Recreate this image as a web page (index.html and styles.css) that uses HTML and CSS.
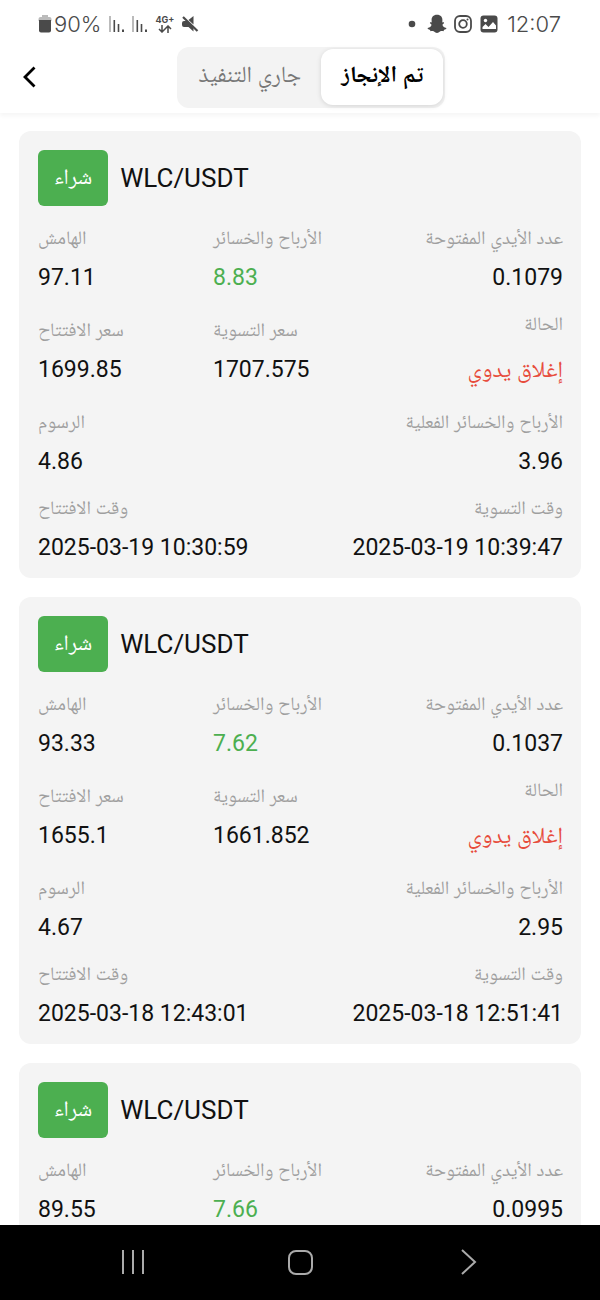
FILE: index.html
```html
<!DOCTYPE html>
<html lang="ar">
<head>
    <meta charset="UTF-8">
    <meta name="viewport" content="width=device-width, initial-scale=1">
    <title>WLC/USDT</title>
    <link rel="stylesheet" href="styles.css">
</head>
<body>
<div class="status-bar">
    <div class="status-group">
        <svg width="14" height="18" viewBox="0 0 14 18">
            <path d="M4 0h6v2h1.500q2 0 2 2v2h-13v-2q0-2 2-2h1.500z" fill="#bbb"/>
            <path d="M1 5h12v10.500q0 2-2 2h-8q-2 0-2-2z" fill="#4a4a4a"/>
        </svg>
        <span class="battery">90%</span>
        <svg class="signal" width="16" height="18" viewBox="0 0 16 18" fill="#4a4a4a">
            <path d="M0 1h2v16h-2z" fill="#bbb"/>
            <path d="M4.500 5h1.600v12h-1.600zM8.700 9h1.600v8h-1.600zM13 14.500h2v2.500h-2z"/>
        </svg>
        <svg class="signal" width="16" height="18" viewBox="0 0 16 18" fill="#4a4a4a">
            <path d="M0 1h2v16h-2z" fill="#bbb"/>
            <path d="M4.500 5h1.600v12h-1.600zM8.700 9h1.600v8h-1.600zM13 14.500h2v2.500h-2z"/>
        </svg>
        <div class="network">
            <span>4G+</span>
            <svg width="14" height="8" viewBox="0 0 14 8" fill="none" stroke="#4a4a4a" stroke-width="1.500">
                <path d="M4 0v7M1 4l3 3 3-3M10 8V1M7 4l3-3 3 3"/>
            </svg>
        </div>
        <svg width="18" height="18" viewBox="0 0 18 18" fill="#4a4a4a">
            <path d="M3 6h3l6.500 6.500v4L7.500 12H3q-2 0-2-2V8q0-2 2-2zM7.500 5l5-4v8.500z"/>
            <path d="M2 2l14.500 14" stroke="#4a4a4a" stroke-width="2.200"/>
        </svg>
    </div>
    <div class="status-group right">
        <svg class="dot" width="8" height="8" viewBox="0 0 8 8"><circle cx="4" cy="4" r="3.300" fill="#4a4a4a"/></svg>
        <svg width="20" height="20" viewBox="0 0 20 20" fill="#4a4a4a">
            <path d="M10 .8C6.200 .8 4.500 3.300 4.600 6.200L4.700 8.300C4 8.600 3.200 8 2.900 8.800 2.700 9.700 4.400 10 4.500 10.700 4.500 12 3 13.600 .6 14.100 .4 15.300 2 15.700 3 15.900L3.500 17.200C4.700 17 5.900 16.800 7 17.600 8 18.400 8.800 19 10 19S12 18.400 13 17.600C14.100 16.800 15.300 17 16.500 17.200L17 15.900C18 15.700 19.600 15.300 19.400 14.100 17 13.600 15.500 12 15.500 10.700 15.600 10 17.300 9.700 17.100 8.800 16.800 8 16 8.600 15.300 8.300L15.400 6.200C15.500 3.300 13.800 .8 10 .8z"/>
        </svg>
        <svg width="20" height="20" viewBox="0 0 20 20" fill="none" stroke="#4a4a4a" stroke-width="1.800">
            <rect x="2" y="2" width="16" height="16" rx="5"/>
            <circle cx="10" cy="10" r="3.800"/>
            <circle cx="14.500" cy="5.500" r="1" fill="#4a4a4a" stroke="none"/>
        </svg>
        <svg width="20" height="20" viewBox="0 0 20 20">
            <rect x="1.500" y="1.500" width="17" height="17" rx="3" fill="#4a4a4a"/>
            <circle cx="6.500" cy="6.500" r="1.700" fill="#fff"/>
            <path d="M3.500 15v-2l3-3 3 3 4.500-5 3 3.500v3.500z" fill="#fff"/>
        </svg>
        <span class="clock">12:07</span>
    </div>
</div>

<header class="header">
    <button class="back" aria-label="رجوع">
        <svg width="14" height="22" viewBox="0 0 14 22" fill="none" stroke="#000" stroke-width="2.800">
            <path d="M12.500 1.500L3 11l9.500 9.500"/>
        </svg>
    </button>
    <div class="tabs">
        <button class="tab">جاري التنفيذ</button>
        <button class="tab active">تم الإنجاز</button>
    </div>
</header>

<main class="list">
    <section class="card">
        <div class="card-title">
            <span class="badge">شراء</span>
            <h2>WLC/USDT</h2>
        </div>
        <dl class="row thirds">
            <div><dt>الهامش</dt><dd>97.11</dd></div>
            <div><dt>الأرباح والخسائر</dt><dd class="green">8.83</dd></div>
            <div><dt>عدد الأيدي المفتوحة</dt><dd>0.1079</dd></div>
        </dl>
        <dl class="row thirds">
            <div><dt>سعر الافتتاح</dt><dd>1699.85</dd></div>
            <div><dt>سعر التسوية</dt><dd>1707.575</dd></div>
            <div><dt>الحالة</dt><dd class="state">إغلاق يدوي</dd></div>
        </dl>
        <dl class="row">
            <div><dt>الرسوم</dt><dd>4.86</dd></div>
            <div><dt>الأرباح والخسائر الفعلية</dt><dd>3.96</dd></div>
        </dl>
        <dl class="row">
            <div><dt>وقت الافتتاح</dt><dd>2025-03-19 10:30:59</dd></div>
            <div><dt>وقت التسوية</dt><dd>2025-03-19 10:39:47</dd></div>
        </dl>
    </section>

    <section class="card">
        <div class="card-title">
            <span class="badge">شراء</span>
            <h2>WLC/USDT</h2>
        </div>
        <dl class="row thirds">
            <div><dt>الهامش</dt><dd>93.33</dd></div>
            <div><dt>الأرباح والخسائر</dt><dd class="green">7.62</dd></div>
            <div><dt>عدد الأيدي المفتوحة</dt><dd>0.1037</dd></div>
        </dl>
        <dl class="row thirds">
            <div><dt>سعر الافتتاح</dt><dd>1655.1</dd></div>
            <div><dt>سعر التسوية</dt><dd>1661.852</dd></div>
            <div><dt>الحالة</dt><dd class="state">إغلاق يدوي</dd></div>
        </dl>
        <dl class="row">
            <div><dt>الرسوم</dt><dd>4.67</dd></div>
            <div><dt>الأرباح والخسائر الفعلية</dt><dd>2.95</dd></div>
        </dl>
        <dl class="row">
            <div><dt>وقت الافتتاح</dt><dd>2025-03-18 12:43:01</dd></div>
            <div><dt>وقت التسوية</dt><dd>2025-03-18 12:51:41</dd></div>
        </dl>
    </section>

    <section class="card">
        <div class="card-title">
            <span class="badge">شراء</span>
            <h2>WLC/USDT</h2>
        </div>
        <dl class="row thirds">
            <div><dt>الهامش</dt><dd>89.55</dd></div>
            <div><dt>الأرباح والخسائر</dt><dd class="green">7.66</dd></div>
            <div><dt>عدد الأيدي المفتوحة</dt><dd>0.0995</dd></div>
        </dl>
    </section>
</main>

<nav class="nav">
    <button aria-label="التطبيقات">
        <svg width="28" height="28" viewBox="0 0 28 28" fill="none" stroke="#aaa" stroke-width="2">
            <path d="M4 2v24M14 2v24M24 2v24"/>
        </svg>
    </button>
    <button aria-label="الرئيسية">
        <svg width="28" height="28" viewBox="0 0 28 28" fill="none" stroke="#aaa" stroke-width="2">
            <rect x="3" y="3" width="23" height="23" rx="7"/>
        </svg>
    </button>
    <button aria-label="السابق">
        <svg width="28" height="28" viewBox="0 0 28 28" fill="none" stroke="#aaa" stroke-width="2">
            <path d="M9 2l13 12L9 26"/>
        </svg>
    </button>
</nav>
</body>
</html>
```
FILE: styles.css
```css
*{
    margin: 0;
    padding: 0;
    box-sizing: border-box;
}
body{
    display: flex;
    flex-direction: column;
    height: 100vh;
    overflow: hidden;
    font-family: Roboto, "Noto Naskh Arabic", "Noto Sans Arabic", "DejaVu Sans", sans-serif;
    color: #111;
    background: #fff;
}
button{
    border: none;
    background: none;
    font-family: inherit;
}
svg{
    display: block;
    flex: none;
}
.status-bar{
    display: flex;
    justify-content: space-between;
    align-items: center;
    height: 47px;
    padding: 0 39px 0 38px;
    color: #4a4a4a;
    font-family: Inter, sans-serif;
    font-size: 22px;
    font-weight: 300;
}
.status-group{
    display: flex;
    align-items: center;
}
.status-group.right{
    gap: 6px;
}
.dot{
    margin-right: 5px;
}
.battery{
    margin: 0 8px 0 2px;
}
.clock{
    margin-left: 2px;
}
.signal{
    margin-right: 7px;
}
.network{
    display: flex;
    flex-direction: column;
    align-items: center;
    margin-right: 7px;
    font-size: 9px;
    font-weight: 700;
    line-height: 10px;
}
.header{
    display: flex;
    align-items: center;
    justify-content: center;
    position: relative;
    padding-bottom: 5px;
    padding-left: 22px;
    box-shadow: 0 3px 4px rgba(0, 0, 0, 0.04);
}
.back{
    position: absolute;
    left: 22px;
    top: 19px;
}
.tabs{
    display: flex;
    padding: 2px 2px 3px;
    border-radius: 12px;
    background: #f3f3f3;
}
.tab{
    padding: 0 20px 4px;
    border-radius: 12px;
    font-size: 23px;
    line-height: 52px;
    color: #777;
}
.tab.active{
    color: #000;
    font-weight: 700;
    background: #fff;
    box-shadow: 0 1px 5px rgba(0, 0, 0, 0.13);
}
.list{
    flex: 1;
    display: flex;
    flex-direction: column;
    gap: 19px;
    min-height: 0;
    overflow: hidden;
    padding: 18px 19px 0;
}
.card{
    display: flex;
    flex-direction: column;
    flex: none;
    gap: 18px;
    padding: 19px 18px 16px 19px;
    border-radius: 12px;
    background: #f4f4f4;
}
.card-title{
    display: flex;
    align-items: center;
    gap: 12px;
}
.card-title h2{
    font-size: 26px;
    font-weight: 400;
}
.badge{
    padding: 0 16px 2px;
    border-radius: 6px;
    font-size: 22px;
    line-height: 54px;
    color: #fff;
    background: #4caf50;
}
.row{
    display: flex;
    align-items: center;
    justify-content: space-between;
}
.thirds div{
    flex: 1;
}
.row div:last-child{
    text-align: right;
}
dt{
    margin-bottom: 12px;
    font-size: 19px;
    line-height: 28px;
    color: #9f9f9f;
    white-space: nowrap;
}
dd{
    font-size: 23px;
    line-height: 28px;
}
.green{
    color: #4caf50;
}
.state{
    line-height: 40px;
    color: #e74c3c;
}
.nav{
    display: flex;
    height: 75px;
    padding: 0 49px 2px;
    background: #000;
}
.nav button{
    flex: 1;
    display: flex;
    align-items: center;
    justify-content: center;
}
```
